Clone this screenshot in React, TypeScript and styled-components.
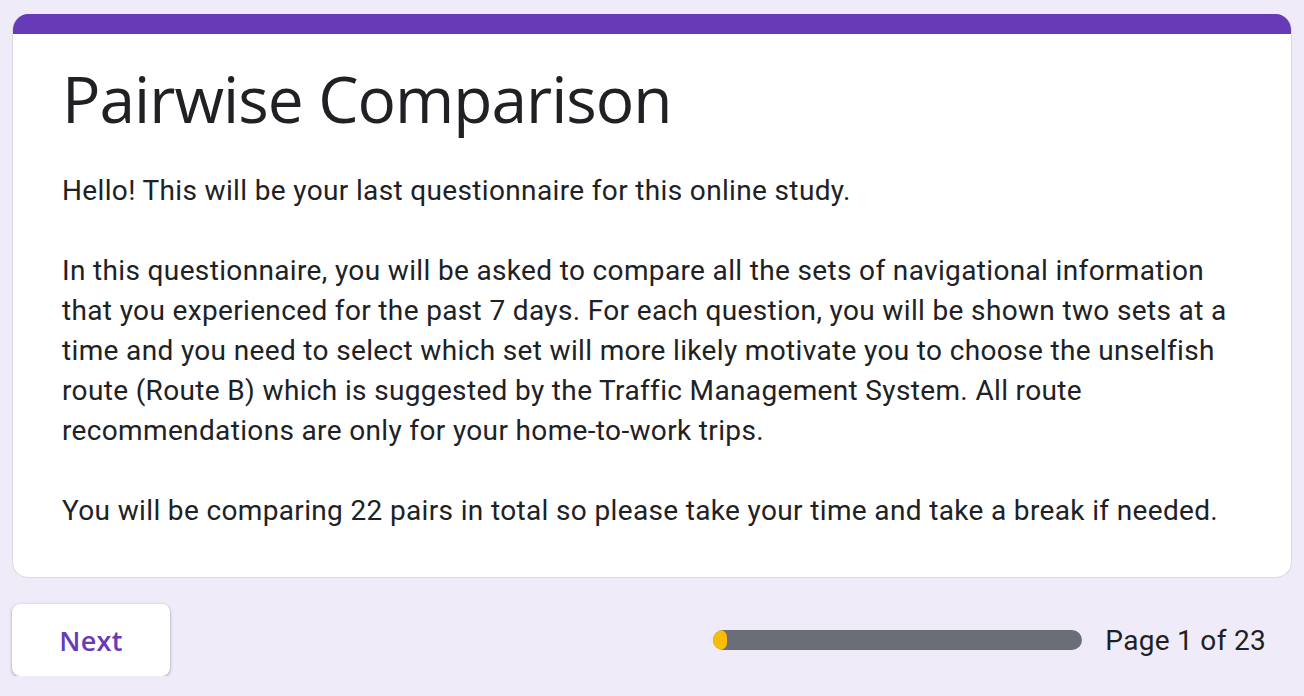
import React from "react";
import styled, { createGlobalStyle } from "styled-components";

const Global = createGlobalStyle`
  html, body { margin: 0; padding: 0; background: #f0ebf8; }
  body { font-family: Roboto, "Liberation Sans", Arial, sans-serif; color: #202124; }
`;

const Page = styled.div`
  padding: 14px 12px 0 12px;
  display: flex;
  flex-direction: column;
  gap: 26px;
`;

const Card = styled.section`
  background: #fff;
  border: 1px solid #dadce0;
  border-top: none;
  border-radius: 16px;
  overflow: hidden;
  display: flex;
  flex-direction: column;
`;

const TopBar = styled.div`
  height: 20px;
  background: #673ab7;
`;

const CardBody = styled.div`
  padding: 25px 49px 46px 49px;
`;

const Title = styled.h1`
  margin: 0 0 32px 0;
  font-family: "Open Sans", "Noto Sans", sans-serif;
  font-weight: 400;
  font-size: 64px;
  line-height: 80px;
  letter-spacing: -1px;
  color: #202124;
`;

const Para = styled.p`
  margin: 0 0 40px 0;
  font-size: 28px;
  line-height: 40px;
  letter-spacing: 0.35px;
  color: #202124;
  &:last-child { margin-bottom: 0; }
`;

const Footer = styled.div`
  display: flex;
  align-items: center;
  justify-content: space-between;
  padding-right: 26px;
`;

const NextButton = styled.button`
  width: 158px;
  height: 72px;
  border: none;
  border-radius: 8px;
  background: #fff;
  box-shadow: 0 1px 2px rgba(60, 64, 67, 0.3), 0 1px 3px 1px rgba(60, 64, 67, 0.15);
  color: #673ab7;
  font-family: "Open Sans", "Noto Sans", sans-serif;
  font-weight: 600;
  font-size: 27px;
  letter-spacing: 0.3px;
  cursor: pointer;
`;

const Progress = styled.div`
  display: flex;
  align-items: center;
  gap: 23px;
`;

const Track = styled.div`
  width: 369px;
  height: 20px;
  border-radius: 10px;
  background: #6b6e76;
  overflow: hidden;
`;

const Fill = styled.div`
  height: 100%;
  background: #fbbc04;
  border-radius: 10px;
`;

const PageLabel = styled.span`
  font-size: 28px;
  letter-spacing: 0.3px;
  color: #202124;
`;

export default function App() {
  const current = 1;
  const total = 23;
  const fillWidth = 14;
  return (
    <>
      <Global />
      <Page>
        <Card>
          <TopBar />
          <CardBody>
            <Title>Pairwise Comparison</Title>
            <Para>Hello! This will be your last questionnaire for this online study.</Para>
            <Para>
              In this questionnaire, you will be asked to compare all the sets of navigational information
              that you experienced for the past 7 days. For each question, you will be shown two sets at a
              time and you need to select which set will more likely motivate you to choose the unselfish
              route (Route B) which is suggested by the Traffic Management System. All route
              recommendations are only for your home-to-work trips.
            </Para>
            <Para>
              You will be comparing 22 pairs in total so please take your time and take a break if needed.
            </Para>
          </CardBody>
        </Card>
        <Footer>
          <NextButton>Next</NextButton>
          <Progress>
            <Track>
              <Fill style={{ width: `${fillWidth}px` }} />
            </Track>
            <PageLabel>
              Page {current} of {total}
            </PageLabel>
          </Progress>
        </Footer>
      </Page>
    </>
  );
}
